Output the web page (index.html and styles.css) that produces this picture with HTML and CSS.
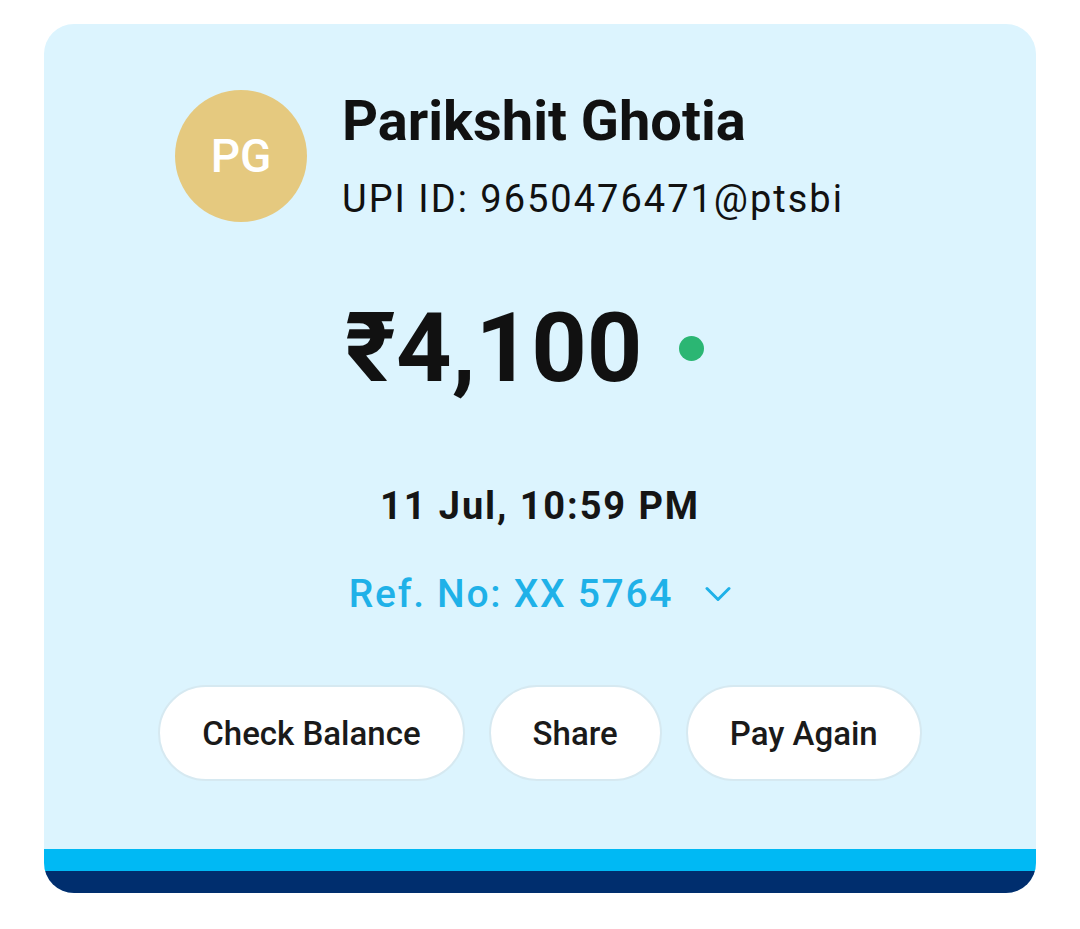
FILE: index.html
```html
<html>
	<head>
		<title>Payment Details</title>
		<meta name="viewport" content="width=device-width, initial-scale=1">
		<link rel="stylesheet" href="styles.css">
	</head>
	<body>
		<div class="card">
			<div class="card-body">
				<div class="payee">
					<div class="avatar">PG</div>
					<div class="payee-info">
						<p class="payee-name">Parikshit Ghotia</p>
						<p class="payee-upi">UPI ID: 9650476471@ptsbi</p>
					</div>
				</div>
				<div class="amount-row">
					<p class="amount">₹4,100</p>
					<span class="status-dot"></span>
				</div>
				<p class="date">11 Jul, 10:59 PM</p>
				<div class="ref">
					<span>Ref. No: XX 5764</span>
					<svg class="chevron" width="26" height="16" viewBox="0 0 26 16">
						<path d="M2 2.5 L13 13.5 L24 2.5" fill="none" stroke="#1fb1e8" stroke-width="3" stroke-linecap="round" stroke-linejoin="round"/>
					</svg>
				</div>
				<div class="actions">
					<button class="btn">Check Balance</button>
					<button class="btn">Share</button>
					<button class="btn">Pay Again</button>
				</div>
			</div>
			<div class="stripe stripe-cyan"></div>
			<div class="stripe stripe-navy"></div>
		</div>
	</body>
</html>
```

FILE: styles.css
```css
*{
	box-sizing: border-box;
}
body{
	margin: 0;
	padding: 24px 0 0 44px;
	background-color: #fff;
	font-family: Roboto, "Noto Sans", sans-serif;
}
p{
	margin: 0;
}
.card{
	width: 992px;
	height: 869px;
	border-radius: 30px;
	overflow: hidden;
	background-color: #dcf4fe;
	display: flex;
	flex-direction: column;
}
.card-body{
	flex: 1;
	padding-top: 66px;
	display: flex;
	flex-direction: column;
}
.payee{
	display: flex;
	align-items: center;
	gap: 35px;
	padding-left: 131px;
}
.avatar{
	width: 132px;
	height: 132px;
	border-radius: 50%;
	background-color: #e5c97f;
	color: #fff;
	font-size: 46px;
	font-weight: 500;
	display: flex;
	align-items: center;
	justify-content: center;
}
.payee-info{
	display: flex;
	flex-direction: column;
	gap: 26px;
}
.payee-name{
	font-size: 56px;
	font-weight: 700;
	line-height: 60px;
	color: #111;
}
.payee-upi{
	font-size: 38px;
	line-height: 44px;
	letter-spacing: 2px;
	color: #111;
}
.amount-row{
	display: flex;
	align-items: center;
	gap: 36px;
	padding-left: 301px;
	margin-top: 71px;
}
.amount{
	font-size: 97px;
	font-weight: 700;
	line-height: 110px;
	color: #111;
}
.status-dot{
	width: 25px;
	height: 25px;
	border-radius: 50%;
	background-color: #2bb673;
}
.date{
	text-align: center;
	font-size: 38px;
	font-weight: 700;
	letter-spacing: 1.9px;
	line-height: 44px;
	color: #151515;
	margin-top: 81px;
}
.ref{
	display: flex;
	align-items: center;
	justify-content: center;
	gap: 32px;
	margin-top: 44px;
	font-size: 39px;
	font-weight: 500;
	letter-spacing: 1.7px;
	line-height: 44px;
	color: #1fb1e8;
}
.actions{
	display: flex;
	justify-content: center;
	gap: 24px;
	margin-top: 69px;
}
.btn{
	height: 96px;
	padding: 0 42px;
	border: 2px solid #d6e9f1;
	border-radius: 48px;
	background-color: #fff;
	font-family: Roboto, "Noto Sans", sans-serif;
	font-size: 33px;
	font-weight: 500;
	color: #1a1a1a;
}
.stripe{
	height: 22px;
}
.stripe-cyan{
	background-color: #00b9f4;
}
.stripe-navy{
	background-color: #002e6e;
}
```
